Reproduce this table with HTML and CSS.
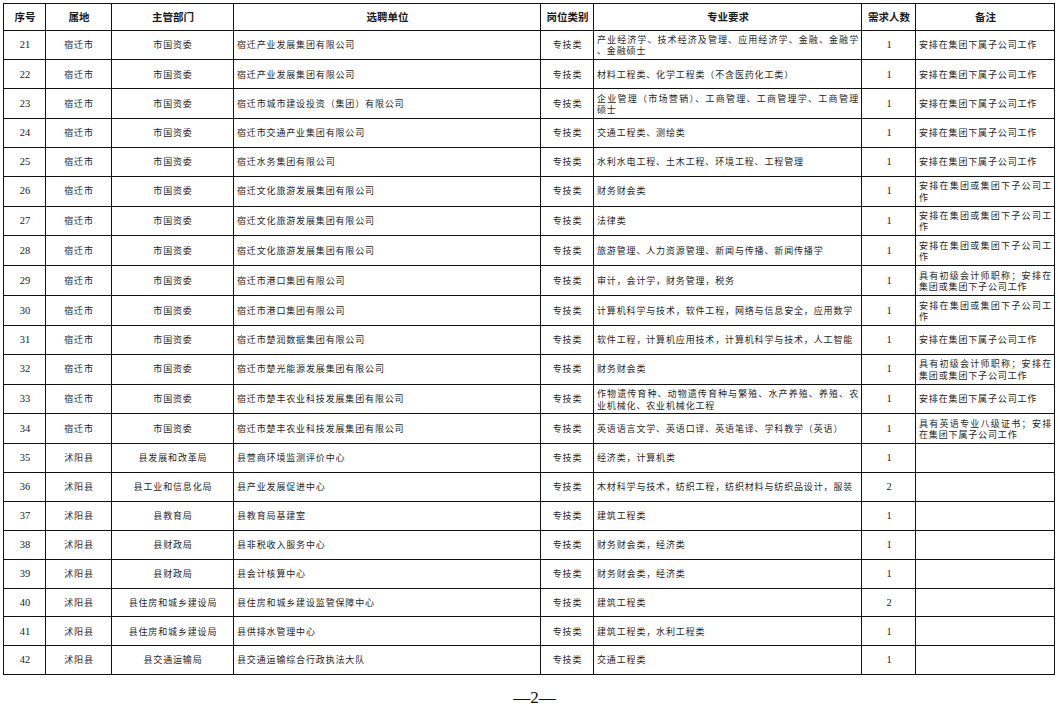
FILE: index.html
```html
<!DOCTYPE html>
<html lang="zh-CN">
<head>
<meta charset="utf-8">
<title>选聘岗位表</title>
<link rel="stylesheet" href="styles.css">
</head>
<body>
<div class="page">
<table class="grid">
<colgroup>
<col class="c1"><col class="c2"><col class="c3"><col class="c4"><col class="c5"><col class="c6"><col class="c7"><col class="c8">
</colgroup>
<thead>
<tr><th>序号</th><th>属地</th><th>主管部门</th><th>选聘单位</th><th>岗位类别</th><th>专业要求</th><th>需求人数</th><th>备注</th></tr>
</thead>
<tbody>
<tr><td class="n">21</td><td class="c">宿迁市</td><td class="c">市国资委</td><td>宿迁产业发展集团有限公司</td><td class="c">专技类</td><td class="two"><span class="jl">产业经济学、技术经济及管理、应用经济学、金融、金融学</span><span class="ln">、金融硕士</span></td><td class="n">1</td><td>安排在集团下属子公司工作</td></tr>
<tr><td class="n">22</td><td class="c">宿迁市</td><td class="c">市国资委</td><td>宿迁产业发展集团有限公司</td><td class="c">专技类</td><td>材料工程类、化学工程类（不含医药化工类）</td><td class="n">1</td><td>安排在集团下属子公司工作</td></tr>
<tr><td class="n">23</td><td class="c">宿迁市</td><td class="c">市国资委</td><td>宿迁市城市建设投资（集团）有限公司</td><td class="c">专技类</td><td class="two"><span class="jl">企业管理（市场营销）、工商管理、工商管理学、工商管理</span><span class="ln">硕士</span></td><td class="n">1</td><td>安排在集团下属子公司工作</td></tr>
<tr><td class="n">24</td><td class="c">宿迁市</td><td class="c">市国资委</td><td>宿迁市交通产业集团有限公司</td><td class="c">专技类</td><td>交通工程类、测绘类</td><td class="n">1</td><td>安排在集团下属子公司工作</td></tr>
<tr><td class="n">25</td><td class="c">宿迁市</td><td class="c">市国资委</td><td>宿迁水务集团有限公司</td><td class="c">专技类</td><td>水利水电工程、土木工程、环境工程、工程管理</td><td class="n">1</td><td>安排在集团下属子公司工作</td></tr>
<tr><td class="n">26</td><td class="c">宿迁市</td><td class="c">市国资委</td><td>宿迁文化旅游发展集团有限公司</td><td class="c">专技类</td><td>财务财会类</td><td class="n">1</td><td class="two"><span class="jl">安排在集团或集团下子公司工</span><span class="ln">作</span></td></tr>
<tr><td class="n">27</td><td class="c">宿迁市</td><td class="c">市国资委</td><td>宿迁文化旅游发展集团有限公司</td><td class="c">专技类</td><td>法律类</td><td class="n">1</td><td class="two"><span class="jl">安排在集团或集团下子公司工</span><span class="ln">作</span></td></tr>
<tr><td class="n">28</td><td class="c">宿迁市</td><td class="c">市国资委</td><td>宿迁文化旅游发展集团有限公司</td><td class="c">专技类</td><td>旅游管理、人力资源管理、新闻与传播、新闻传播学</td><td class="n">1</td><td class="two"><span class="jl">安排在集团或集团下子公司工</span><span class="ln">作</span></td></tr>
<tr><td class="n">29</td><td class="c">宿迁市</td><td class="c">市国资委</td><td>宿迁市港口集团有限公司</td><td class="c">专技类</td><td>审计，会计学，财务管理，税务</td><td class="n">1</td><td class="two"><span class="jl">具有初级会计师职称；安排在</span><span class="ln">集团或集团下子公司工作</span></td></tr>
<tr><td class="n">30</td><td class="c">宿迁市</td><td class="c">市国资委</td><td>宿迁市港口集团有限公司</td><td class="c">专技类</td><td>计算机科学与技术，软件工程，网络与信息安全，应用数学</td><td class="n">1</td><td class="two"><span class="jl">安排在集团或集团下子公司工</span><span class="ln">作</span></td></tr>
<tr><td class="n">31</td><td class="c">宿迁市</td><td class="c">市国资委</td><td>宿迁市楚润数据集团有限公司</td><td class="c">专技类</td><td>软件工程，计算机应用技术，计算机科学与技术，人工智能</td><td class="n">1</td><td>安排在集团下属子公司工作</td></tr>
<tr><td class="n">32</td><td class="c">宿迁市</td><td class="c">市国资委</td><td>宿迁市楚光能源发展集团有限公司</td><td class="c">专技类</td><td>财务财会类</td><td class="n">1</td><td class="two"><span class="jl">具有初级会计师职称；安排在</span><span class="ln">集团或集团下子公司工作</span></td></tr>
<tr><td class="n">33</td><td class="c">宿迁市</td><td class="c">市国资委</td><td>宿迁市楚丰农业科技发展集团有限公司</td><td class="c">专技类</td><td class="two"><span class="jl">作物遗传育种、动物遗传育种与繁殖、水产养殖、养殖、农</span><span class="ln">业机械化、农业机械化工程</span></td><td class="n">1</td><td>安排在集团下属子公司工作</td></tr>
<tr><td class="n">34</td><td class="c">宿迁市</td><td class="c">市国资委</td><td>宿迁市楚丰农业科技发展集团有限公司</td><td class="c">专技类</td><td>英语语言文学、英语口译、英语笔译、学科教学（英语）</td><td class="n">1</td><td class="two"><span class="jl">具有英语专业八级证书；安排</span><span class="ln">在集团下属子公司工作</span></td></tr>
<tr><td class="n">35</td><td class="c">沭阳县</td><td class="c">县发展和改革局</td><td>县营商环境监测评价中心</td><td class="c">专技类</td><td>经济类，计算机类</td><td class="n">1</td><td></td></tr>
<tr><td class="n">36</td><td class="c">沭阳县</td><td class="c">县工业和信息化局</td><td>县产业发展促进中心</td><td class="c">专技类</td><td>木材科学与技术，纺织工程，纺织材料与纺织品设计，服装</td><td class="n">2</td><td></td></tr>
<tr><td class="n">37</td><td class="c">沭阳县</td><td class="c">县教育局</td><td>县教育局基建室</td><td class="c">专技类</td><td>建筑工程类</td><td class="n">1</td><td></td></tr>
<tr><td class="n">38</td><td class="c">沭阳县</td><td class="c">县财政局</td><td>县非税收入服务中心</td><td class="c">专技类</td><td>财务财会类，经济类</td><td class="n">1</td><td></td></tr>
<tr><td class="n">39</td><td class="c">沭阳县</td><td class="c">县财政局</td><td>县会计核算中心</td><td class="c">专技类</td><td>财务财会类，经济类</td><td class="n">1</td><td></td></tr>
<tr><td class="n">40</td><td class="c">沭阳县</td><td class="c">县住房和城乡建设局</td><td>县住房和城乡建设监管保障中心</td><td class="c">专技类</td><td>建筑工程类</td><td class="n">2</td><td></td></tr>
<tr><td class="n">41</td><td class="c">沭阳县</td><td class="c">县住房和城乡建设局</td><td>县供排水管理中心</td><td class="c">专技类</td><td>建筑工程类，水利工程类</td><td class="n">1</td><td></td></tr>
<tr><td class="n">42</td><td class="c">沭阳县</td><td class="c">县交通运输局</td><td>县交通运输综合行政执法大队</td><td class="c">专技类</td><td>交通工程类</td><td class="n">1</td><td></td></tr>
</tbody>
</table>
<div class="foot">—2—</div>
</div>
</body>
</html>
```

FILE: styles.css
```css
html, body {
  margin: 0;
  padding: 0;
  background: #ffffff;
}

body {
  font-family: "Noto Sans CJK SC", "Noto Sans", sans-serif;
  color: #222222;
}

.page {
  padding: 3px 0 0 3px;
}

.grid {
  border-collapse: collapse;
  table-layout: fixed;
  width: 1051px;
}

.c1 { width: 42px; }
.c2 { width: 66px; }
.c3 { width: 122px; }
.c4 { width: 307px; }
.c5 { width: 53px; }
.c6 { width: 268px; }
.c7 { width: 54px; }
.c8 { width: 139px; }

.grid th,
.grid td {
  border: 1px solid #111111;
  padding: 0 2px 0 3px;
  vertical-align: middle;
  white-space: nowrap;
  overflow: hidden;
}

.grid th {
  height: 25.5px;
  font-size: 10.5px;
  font-weight: 700;
  text-align: center;
  color: #1a1a1a;
  letter-spacing: 0;
}

.grid td {
  height: 27.85px;
  font-size: 9px;
  line-height: 11.5px;
  letter-spacing: 0.85px;
  text-align: left;
  color: #262626;
}

.grid td.c {
  text-align: center;
}

.grid td.n {
  text-align: center;
  font-family: "Liberation Serif", "Times New Roman", serif;
  font-size: 10.5px;
  letter-spacing: 0;
  color: #1a1a1a;
}

.grid td.two {
  padding-top: 1px;
}

.jl {
  display: block;
  text-align: justify;
  text-align-last: justify;
}

.ln {
  display: block;
}

.foot {
  margin-top: 14px;
  padding-left: 8px;
  text-align: center;
  font-family: "Liberation Serif", "Times New Roman", serif;
  font-size: 17px;
  line-height: 18px;
  color: #111111;
}
```
